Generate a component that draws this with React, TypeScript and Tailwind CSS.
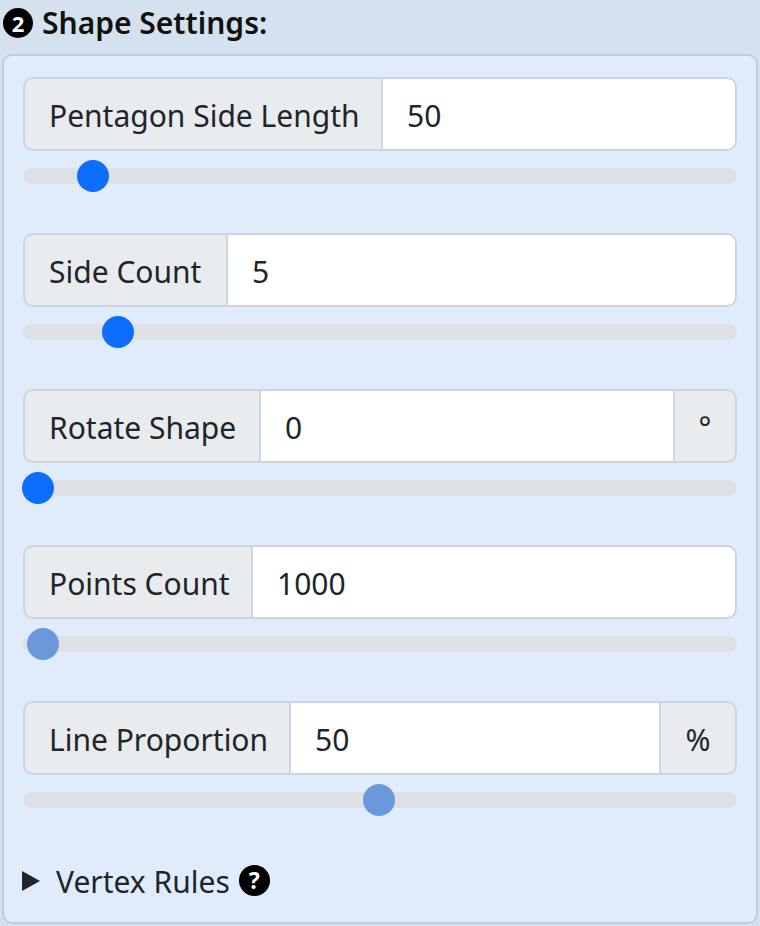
import React from "react";

const font = { fontFamily: '"Noto Sans", "Open Sans", sans-serif' };

function Slider({ pos, muted }: { pos: number; muted?: boolean }) {
  return (
    <div className="relative mt-[17px] h-[16px] w-full rounded-full bg-[#dde0e5]">
      <div
        className={`absolute top-1/2 h-[32px] w-[32px] -translate-x-1/2 -translate-y-1/2 rounded-full ${
          muted ? "bg-[#6a98da]" : "bg-[#0d6efd]"
        }`}
        style={{ left: pos }}
      />
    </div>
  );
}

function Group({
  label,
  labelW,
  value,
  addon,
  addonW,
}: {
  label: string;
  labelW: number;
  value: string;
  addon?: string;
  addonW?: number;
}) {
  return (
    <div className="flex h-[74px] w-full text-[#212529]">
      <div
        className="flex shrink-0 items-center rounded-l-[10px] border-2 border-[#ced4da] bg-[#e9ecef] pl-[24px] pt-[3px]"
        style={{ width: labelW }}
      >
        {label}
      </div>
      <div
        className={`flex flex-1 items-center border-y-2 border-r-2 border-[#ced4da] bg-white pl-[24px] pt-[3px] ${
          addon ? "" : "rounded-r-[10px]"
        }`}
      >
        {value}
      </div>
      {addon && (
        <div
          className="flex shrink-0 items-center justify-center rounded-r-[10px] border-y-2 border-r-2 border-[#ced4da] bg-[#e9ecef] pt-[3px]"
          style={{ width: addonW }}
        >
          {addon}
        </div>
      )}
    </div>
  );
}

export default function App() {
  return (
    <div
      className="h-[926px] w-[760px] overflow-hidden bg-[#d5e1ef] px-[2px] text-[30px] leading-[1.4]"
      style={font}
    >
      <div className="flex h-[54px] items-center gap-[9px] pb-[8px] pl-[1px]">
        <div className="flex h-[30px] w-[30px] items-center justify-center rounded-full bg-black text-[22px] font-bold leading-none text-white">
          2
        </div>
        <div className="text-[30px] font-semibold text-[#111]">Shape Settings:</div>
      </div>
      <div className="h-[870px] rounded-[10px] border-2 border-[#c3cbd8] bg-[#e0ecfb] px-[19px] pt-[21px]">
        <div className="flex flex-col gap-[49px]">
          <div>
            <Group label="Pentagon Side Length" labelW={360} value="50" />
            <Slider pos={70} />
          </div>
          <div>
            <Group label="Side Count" labelW={205} value="5" />
            <Slider pos={95} />
          </div>
          <div>
            <Group label="Rotate Shape" labelW={238} value="0" addon="°" addonW={62} />
            <Slider pos={15} />
          </div>
          <div>
            <Group label="Points Count" labelW={230} value="1000" />
            <Slider pos={20} muted />
          </div>
          <div>
            <Group label="Line Proportion" labelW={268} value="50" addon="%" addonW={76} />
            <Slider pos={356} muted />
          </div>
        </div>
        <div className="mt-[50px] flex items-center text-[#212529]">
          <svg width="18" height="20" viewBox="0 0 18 20" className="ml-[-1px] mr-[16px]">
            <polygon points="0,0 18,10 0,20" fill="#212529" />
          </svg>
          <span className="pt-[3px]">Vertex Rules</span>
          <div className="ml-[9px] flex h-[31px] w-[31px] items-center justify-center rounded-full bg-black text-[23px] font-bold leading-none text-white">
            ?
          </div>
        </div>
      </div>
    </div>
  );
}
